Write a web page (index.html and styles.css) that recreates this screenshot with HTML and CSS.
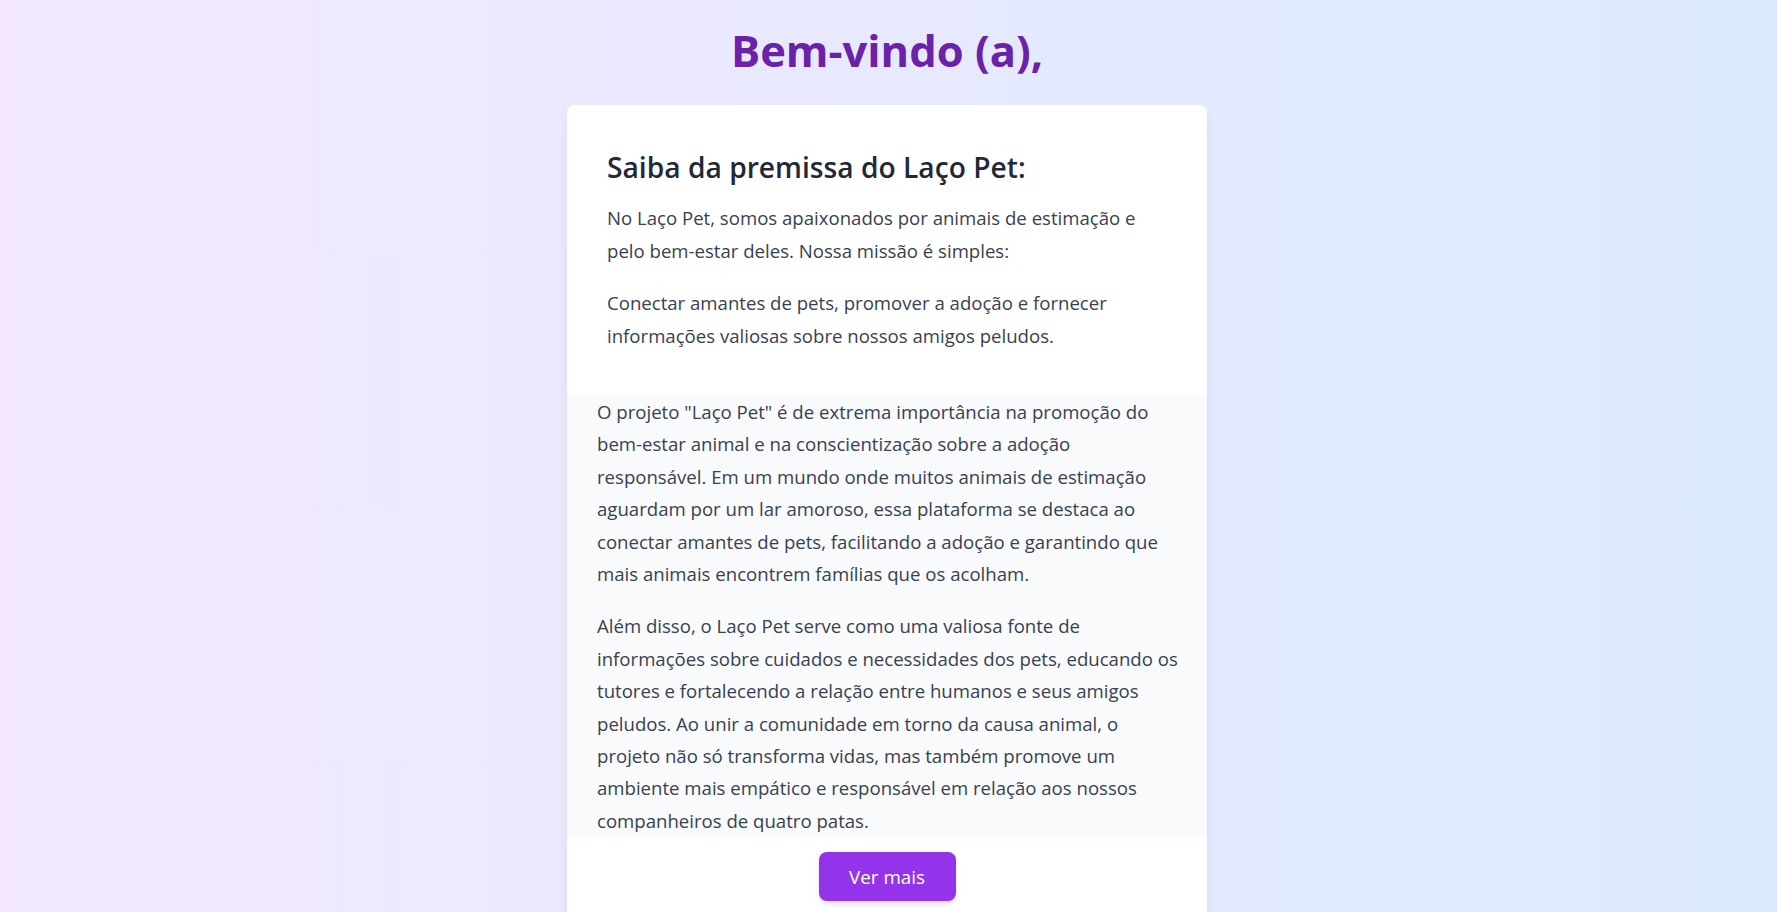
FILE: index.html
```html
<!DOCTYPE html>
<html lang="pt-BR">
<head>
<meta charset="utf-8">
<title>Laço Pet</title>
<link rel="stylesheet" href="styles.css">
</head>
<body>
<main class="page">
  <h1 class="welcome">Bem-vindo (a),</h1>
  <section class="card">
    <div class="intro">
      <h2 class="intro-title">Saiba da premissa do Laço Pet:</h2>
      <p>No Laço Pet, somos apaixonados por animais de estimação e pelo bem-estar deles. Nossa missão é simples:</p>
      <p>Conectar amantes de pets, promover a adoção e fornecer informações valiosas sobre nossos amigos peludos.</p>
    </div>
    <div class="details">
      <p>O projeto "Laço Pet" é de extrema importância na promoção do bem-estar animal e na conscientização sobre a adoção responsável. Em um mundo onde muitos animais de estimação aguardam por um lar amoroso, essa plataforma se destaca ao conectar amantes de pets, facilitando a adoção e garantindo que mais animais encontrem famílias que os acolham.</p>
      <p>Além disso, o Laço Pet serve como uma valiosa fonte de informações sobre cuidados e necessidades dos pets, educando os tutores e fortalecendo a relação entre humanos e seus amigos peludos. Ao unir a comunidade em torno da causa animal, o projeto não só transforma vidas, mas também promove um ambiente mais empático e responsável em relação aos nossos companheiros de quatro patas.</p>
    </div>
    <div class="actions">
      <button class="btn" type="button">Ver mais</button>
    </div>
  </section>
</main>
</body>
</html>
```
FILE: styles.css
```css
* { box-sizing: border-box; }
html, body { margin: 0; padding: 0; }
body {
  font-family: "Open Sans", "Noto Sans", sans-serif;
  background: linear-gradient(to right, #f3e8ff, #dbeafe);
  min-height: 100vh;
  color: #374151;
}
.page {
  display: flex;
  flex-direction: column;
  align-items: center;
  padding: 25px 3px 40px 0;
}
.welcome {
  margin: 0 0 28px;
  font-size: 43.5px;
  line-height: 52px;
  font-weight: 700;
  color: #6b21a8;
}
.card {
  width: 640px;
  background: #ffffff;
  border-radius: 8px;
  box-shadow: 0 10px 15px -3px rgba(0,0,0,0.08), 0 4px 6px -4px rgba(0,0,0,0.06);
  overflow: hidden;
}
.intro {
  padding: 44px 40px 43px;
}
.intro-title {
  margin: 0 0 17px;
  font-size: 28.2px;
  line-height: 36px;
  font-weight: 600;
  color: #1f2937;
}
.intro p {
  margin: 0;
  font-size: 18.6px;
  line-height: 32.5px;
  color: #374151;
}
.details p {
  margin: 0;
  font-size: 18.6px;
  line-height: 32.4px;
  color: #374151;
}
.intro p + p, .details p + p { margin-top: 20px; }
.details {
  background: #f9fafb;
  padding: 1px 26px 0 30px;
}
.actions {
  display: flex;
  justify-content: center;
  padding: 15px 0 24px;
}
.btn {
  font-family: inherit;
  font-size: 18.8px;
  line-height: 26px;
  color: #ffffff;
  background: #9333ea;
  border: none;
  border-radius: 8px;
  width: 137px;
  height: 49px;
  padding: 0;
  box-shadow: 0 4px 6px -1px rgba(0,0,0,0.12), 0 2px 4px -2px rgba(0,0,0,0.1);
  cursor: pointer;
}
```
